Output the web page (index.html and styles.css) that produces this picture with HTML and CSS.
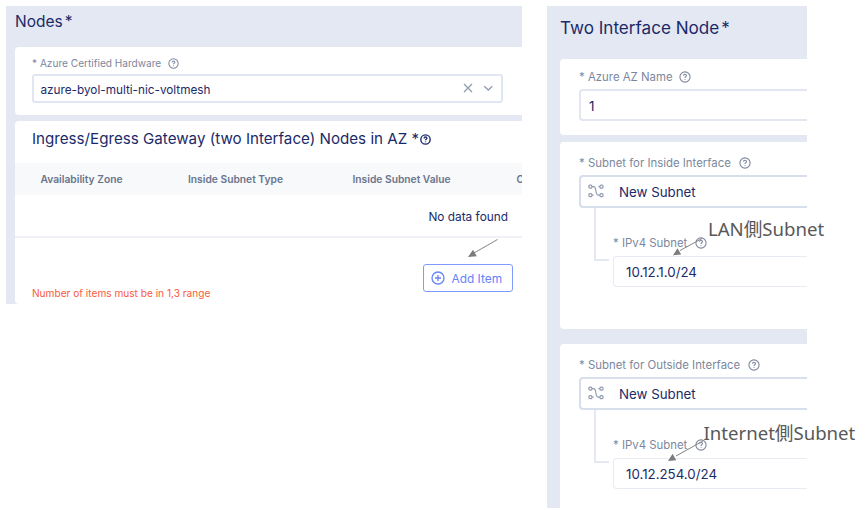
FILE: index.html
```html
<!DOCTYPE html>
<html lang="ja">
<head>
<meta charset="utf-8">
<title>Azure nodes</title>
<link rel="stylesheet" href="styles.css">
</head>
<body>
<svg width="0" height="0" class="defs">
  <symbol id="help" viewBox="0 0 12 12"><circle cx="6" cy="6" r="5.1"/><path d="M4.5 4.8c0-2 3-2 3-.2 0 1.200-1.500 1.100-1.500 2.300M6 8.200v.9"/></symbol>
  <symbol id="subnet" viewBox="0 0 16 14"><rect x=".9" y="1.200" width="3" height="3" rx="1"/><rect x="12" y="1.200" width="3" height="3" rx="1"/><rect x=".9" y="9.700" width="3" height="3" rx="1"/><rect x="12" y="9.700" width="3" height="3" rx="1"/><path d="M4 2.700h1.500c2 0 2.100 1.800 2.400 4.200s.5 4.300 2.500 4.300H12M12 2.700h-1.600M4 11.200h1.600"/></symbol>
</svg>
<main class="page">
  <section class="panel nodes">
    <h1 class="nodes-title">Nodes<span class="star">*</span></h1>
    <div class="card hardware">
      <div class="label small"><span>* Azure Certified Hardware</span><svg class="help"><use href="#help"/></svg></div>
      <div class="combo"><span class="combo-text">azure-byol-multi-nic-voltmesh</span>
        <svg class="combo-icons" viewBox="0 0 32 12"><path d="M2 2l8 8M10 2l-8 8M22.300 4.200l4 3.800 4-3.800"/></svg>
      </div>
    </div>
    <div class="card gateway">
      <h2><span>Ingress/Egress Gateway (two Interface) Nodes in AZ *</span><svg class="help"><use href="#help"/></svg></h2>
      <div class="thead"><span>Availability Zone</span><span>Inside Subnet Type</span><span>Inside Subnet Value</span><span>O</span></div>
      <div class="empty"><span>No data found</span></div>
      <div class="actions">
        <span class="error">Number of items must be in 1,3 range</span>
        <button class="add"><svg viewBox="0 0 14 14"><circle cx="7" cy="7" r="6"/><path d="M7 4v6M4 7h6"/></svg><span>Add Item</span></button>
      </div>
    </div>
  </section>
  <section class="panel node">
    <h1 class="node-title">Two Interface Node<span class="star">*</span></h1>
    <div class="card az">
      <div class="label az-label"><span>* Azure AZ Name</span><svg class="help"><use href="#help"/></svg></div>
      <div class="field">1</div>
    </div>
    <div class="card inside">
      <div class="label"><span>* Subnet for Inside Interface</span><svg class="help"><use href="#help"/></svg></div>
      <div class="select"><svg class="subnet"><use href="#subnet"/></svg><span>New Subnet</span></div>
      <div class="nested"><i class="branch"></i><div class="nested-body">
        <div class="label"><span>* IPv4 Subnet</span><svg class="help"><use href="#help"/></svg></div>
        <div class="ip">10.12.1.0/24</div>
      </div></div>
    </div>
    <div class="card outside">
      <div class="label"><span>* Subnet for Outside Interface</span><svg class="help"><use href="#help"/></svg></div>
      <div class="select"><svg class="subnet"><use href="#subnet"/></svg><span>New Subnet</span></div>
      <div class="nested"><i class="branch"></i><div class="nested-body">
        <div class="label"><span>* IPv4 Subnet</span><svg class="help"><use href="#help"/></svg></div>
        <div class="ip">10.12.254.0/24</div>
      </div></div>
    </div>
  </section>
</main>
<svg class="arrows" viewBox="0 0 865 510">
  <path class="line" d="M497.500 239.500L474 253M702 238.500L680 250.500M703 441L676 456"/>
  <path class="head" d="M468 257l5-7.200 3.800 6.500zM673 255.300l4.500-7 3.700 6.300zM668 461l4.600-7.300 3.600 6.500z"/>
</svg>
<span class="note lan">LAN側Subnet</span>
<span class="note internet">Internet側Subnet</span>
</body>
</html>
```
FILE: styles.css
```css
* { box-sizing: border-box; }
body { margin: 0; width: 865px; height: 510px; overflow: hidden; position: relative; background: #fff; font-family: Inter, sans-serif; color: #1b2a68; }
.defs { position: absolute; }
.page { display: flex; gap: 25px; padding: 6px; align-items: flex-start; }
.panel { background: #e4e8f2; overflow: hidden; flex: none; white-space: nowrap; }
.nodes { width: 516px; height: 298px; padding-left: 9px; }
.node { width: 260px; height: 502px; padding-left: 13px; }
h1, h2 { margin: 0; font-weight: 400; }
.nodes-title { height: 41px; font-size: 15.5px; line-height: 32px; }
.node-title { height: 53px; font-size: 17.1px; line-height: 44px; }
.star { margin-left: 2px; }
.card { background: #fff; border-radius: 4px 0 0 4px; }
.hardware { height: 68px; padding: 9px 19px 0 17px; }
.label { display: flex; align-items: center; gap: 8px; color: #7c879d; font-size: 11.4px; height: 14px; line-height: 14px; }
.az-label { gap: 6.5px; }
.small { font-size: 10.1px; gap: 6.5px; height: 14px; }
.help { width: 12px; height: 12px; fill: none; stroke: currentColor; stroke-width: 1.1; flex: none; }
.small .help { width: 11px; height: 11px; }
.combo { height: 29px; margin-top: 4px; border: 2px solid #e1e6f3; border-radius: 3px; display: flex; align-items: center; justify-content: space-between; padding: 2px 7px 0 6.5px; font-size: 11.75px; }
.combo-icons { width: 32px; height: 12px; fill: none; stroke: #929cb0; stroke-width: 1.3; margin-top: -4px; }
.gateway { margin-top: 6px; height: 183px; }
h2 { display: flex; align-items: center; height: 42px; padding: 0 0 7px 17px; font-size: 15.17px; }
h2 .help { width: 11px; height: 11px; stroke-width: 1.5; margin-left: 1px; margin-top: 1px; }
.thead { height: 32px; background: #f7f9fb; display: grid; grid-template-columns: 147.5px 164.5px 164px 80px; align-items: center; padding-left: 25.5px; font-size: 10.25px; font-weight: 600; color: #69758d; }
.empty { height: 43px; border-bottom: 2px solid #eff1f7; text-align: right; padding-right: 14px; line-height: 44px; font-size: 11.85px; }
.actions { display: flex; justify-content: space-between; align-items: flex-start; padding: 26px 9px 0 17px; }
.error { color: #fa5a40; font-size: 10.12px; line-height: 14px; margin-top: 22px; }
.add { width: 90px; height: 28px; border: 1.5px solid #7f9bff; border-radius: 3px; background: #fff; color: #6583fa; display: flex; align-items: center; gap: 6.5px; padding: 0 0 0 7px; font: 11.9px Inter, sans-serif; }
.add svg { width: 14px; height: 14px; fill: none; stroke: currentColor; stroke-width: 1.3; }
.az { height: 76px; padding: 11px 0 0 19px; }
.inside { height: 187px; margin-top: 7px; padding: 14px 0 0 19px; }
.outside { height: 166px; margin-top: 15px; padding: 14px 0 0 19px; }
.field { height: 32px; margin-top: 5px; border: 2px solid #e1e6f1; border-right: 0; border-radius: 4px 0 0 4px; padding-left: 8px; line-height: 30px; font-size: 13.5px; }
.select { height: 33px; margin-top: 5px; border: 2px solid #d7deec; border-right: 0; border-radius: 4px 0 0 4px; display: flex; align-items: center; gap: 15px; padding-left: 7px; font-size: 13.3px; }
.subnet { width: 16px; height: 14px; fill: none; stroke: #929cb0; stroke-width: 1.2; margin-top: -1px; }
.nested { display: flex; padding-left: 15px; gap: 4px; }
.branch { width: 15px; height: 53px; border-left: 2px solid #e3e8f3; border-bottom: 2px solid #e3e8f3; }
.nested-body { flex: 1; padding-top: 28px; }
.ip { height: 31px; margin-top: 6px; border: 1px solid #e7ebf4; border-right: 0; border-radius: 4px 0 0 4px; padding-left: 12px; line-height: 30px; font-size: 13.3px; }
.arrows { position: absolute; left: 0; top: 0; width: 865px; height: 510px; }
.line { stroke: #858585; stroke-width: 1; fill: none; }
.head { fill: #7c7c7c; }
.note { position: absolute; color: #585858; font: 18.6px/24px "Noto Sans", "Noto Sans CJK JP", sans-serif; white-space: nowrap; }
.lan { left: 708px; top: 217px; }
.internet { left: 703.5px; top: 421px; }
```
